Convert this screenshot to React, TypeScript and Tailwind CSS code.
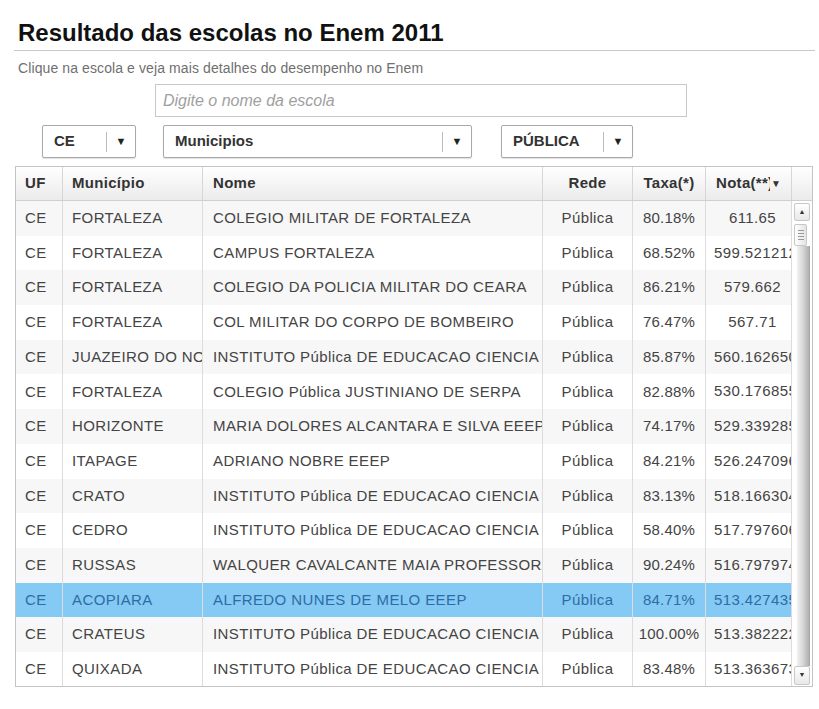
const rows = [
  ["FORTALEZA", "COLEGIO MILITAR DE FORTALEZA", "80.18%", "611.65"],
  ["FORTALEZA", "CAMPUS FORTALEZA", "68.52%", "599.521212121"],
  ["FORTALEZA", "COLEGIO DA POLICIA MILITAR DO CEARA", "86.21%", "579.662"],
  ["FORTALEZA", "COL MILITAR DO CORPO DE BOMBEIRO", "76.47%", "567.71"],
  ["JUAZEIRO DO NORTE", "INSTITUTO Pública DE EDUCACAO CIENCIA E TECNOLOGIA", "85.87%", "560.162650602"],
  ["FORTALEZA", "COLEGIO Pública JUSTINIANO DE SERPA", "82.88%", "530.176855895"],
  ["HORIZONTE", "MARIA DOLORES ALCANTARA E SILVA EEEP", "74.17%", "529.339285714"],
  ["ITAPAGE", "ADRIANO NOBRE EEEP", "84.21%", "526.247096774"],
  ["CRATO", "INSTITUTO Pública DE EDUCACAO CIENCIA E TECNOLOGIA", "83.13%", "518.166304348"],
  ["CEDRO", "INSTITUTO Pública DE EDUCACAO CIENCIA E TECNOLOGIA", "58.40%", "517.797606838"],
  ["RUSSAS", "WALQUER CAVALCANTE MAIA PROFESSORA", "90.24%", "516.797974684"],
  ["ACOPIARA", "ALFREDO NUNES DE MELO EEEP", "84.71%", "513.427435897"],
  ["CRATEUS", "INSTITUTO Pública DE EDUCACAO CIENCIA E TECNOLOGIA", "100.00%", "513.382222222"],
  ["QUIXADA", "INSTITUTO Pública DE EDUCACAO CIENCIA E TECNOLOGIA", "83.48%", "513.363673469"],
];

function Select({ label, width }: { label: string; width: string }) {
  return (
    <div
      className={`${width} h-[33px] flex items-center border border-[#a9a9a9] rounded-[2px] bg-white shadow-[0_1px_1px_rgba(0,0,0,0.12)]`}
    >
      <span className="flex-1 pl-[11px] text-[15px] font-bold text-[#333] whitespace-nowrap">
        {label}
      </span>
      <span className="h-[20px] border-l border-[#bbb]" />
      <span className="w-[28px] text-center text-[11px] text-[#222]">▼</span>
    </div>
  );
}

export default function App() {
  return (
    <div
      className="w-[819px] h-[709px] bg-white px-[14px] pt-[19px] text-[#444]"
      style={{ fontFamily: '"Liberation Sans", Arial, sans-serif' }}
    >
      <h1 className="pl-[4px] text-[24px] leading-[28px] font-bold text-[#111]">
        Resultado das escolas no Enem 2011
      </h1>
      <div className="mt-[3px] h-px w-[801px] bg-[#c8c8c8]" />

      <p className="mt-[8px] pl-[4px] text-[14px] leading-[18px] tracking-[0.1px] text-[#6f6f6f]">
        Clique na escola e veja mais detalhes do desempenho no Enem
      </p>

      <div className="mt-[7px] ml-[141px] w-[532px] h-[33px] border border-[#c8c8c8] flex items-center pl-[7px] text-[16px] italic text-[#a0a0a0]">
        Digite o nome da escola
      </div>

      <div className="mt-[8px] ml-[28px] flex gap-[27px]">
        <Select label="CE" width="w-[94px]" />
        <Select label="Municipios" width="w-[309px]" />
        <div className="ml-[2px]">
          <Select label="PÚBLICA" width="w-[132px]" />
        </div>
      </div>

      <div className="mt-[8px] ml-px w-[798px] border border-[#c4c4c4]">
        {/* header */}
        <div className="h-[34px] flex border-b border-[#cfcfcf] bg-gradient-to-b from-white to-[#ebebeb] text-[15px] tracking-[0.3px] font-bold text-[#333]">
          <div className="w-[47px] shrink-0 border-r border-[#d6d6d6] flex items-center px-[9px]">UF</div>
          <div className="w-[140px] shrink-0 border-r border-[#d6d6d6] flex items-center px-[9px]">Município</div>
          <div className="w-[340px] shrink-0 border-r border-[#d6d6d6] flex items-center px-[10px]">Nome</div>
          <div className="w-[90px] shrink-0 border-r border-[#d6d6d6] flex items-center justify-center">Rede</div>
          <div className="w-[73px] shrink-0 border-r border-[#d6d6d6] flex items-center justify-center">Taxa(*)</div>
          <div className="w-[86px] shrink-0 border-r border-[#d6d6d6] flex items-center pl-[10px]">
            <span className="w-[54px] overflow-hidden whitespace-nowrap">Nota(**)</span>
            <span className="ml-[1px] text-[10px]">▼</span>
          </div>
          <div className="flex-1" />
        </div>

        {/* body */}
        <div className="h-[485px] flex overflow-hidden">
          <div className="w-[776px] shrink-0">
            {rows.map((r, i) => {
              const sel = i === 11;
              const bg = sel ? "bg-[#84caf4] text-[#2f6ca5]" : i % 2 === 0 ? "bg-[#f7f7f7]" : "bg-white";
              return (
                <div key={i} className={`h-[34.7px] flex text-[15px] tracking-[0.4px] ${bg}`}>
                  <div className="w-[47px] shrink-0 border-r border-[#dcdcdc] flex items-center px-[9px]">CE</div>
                  <div className="w-[140px] shrink-0 border-r border-[#dcdcdc] flex items-center px-[9px] overflow-hidden whitespace-nowrap">
                    {r[0]}
                  </div>
                  <div className="w-[340px] shrink-0 border-r border-[#dcdcdc] flex items-center px-[10px] overflow-hidden whitespace-nowrap">
                    {r[1]}
                  </div>
                  <div className="w-[90px] shrink-0 border-r border-[#dcdcdc] flex items-center justify-center">Pública</div>
                  <div className="w-[73px] shrink-0 border-r border-[#dcdcdc] flex items-center justify-center whitespace-nowrap tracking-[0.2px]">
                    {r[2]}
                  </div>
                  <div className="w-[86px] shrink-0 border-r border-[#dcdcdc] pl-[8px] leading-[34.7px] text-center overflow-hidden whitespace-nowrap">
                    {r[3]}
                  </div>
                </div>
              );
            })}
          </div>

          {/* scrollbar */}
          <div className="flex-1 flex flex-col bg-white px-[2px] pt-[2px] pb-[1px]">
            <div className="h-[18px] border border-[#c8c8c8] rounded-[2px] bg-gradient-to-b from-white to-[#e8e8e8] flex items-center justify-center text-[7px] text-[#333]">
              ▲
            </div>
            <div className="mt-[3px] h-[22px] mr-[3px] border border-[#c8c8c8] rounded-[2px] bg-gradient-to-r from-white to-[#e4e4e4] flex flex-col items-center justify-center gap-[2px]">
              <span className="w-[6px] h-px bg-[#9a9a9a]" />
              <span className="w-[6px] h-px bg-[#9a9a9a]" />
              <span className="w-[6px] h-px bg-[#9a9a9a]" />
              <span className="w-[6px] h-px bg-[#9a9a9a]" />
            </div>
            <div className="flex-1 ml-[3px] border-r border-[#a8a8a8] bg-gradient-to-r from-[#f2f2f2] via-[#d6d6d6] to-[#b0b0b0]" />
            <div className="h-[19px] border border-[#c8c8c8] rounded-[2px] bg-gradient-to-b from-white to-[#e8e8e8] flex items-center justify-center text-[7px] text-[#333]">
              ▼
            </div>
          </div>
        </div>
      </div>
    </div>
  );
}
